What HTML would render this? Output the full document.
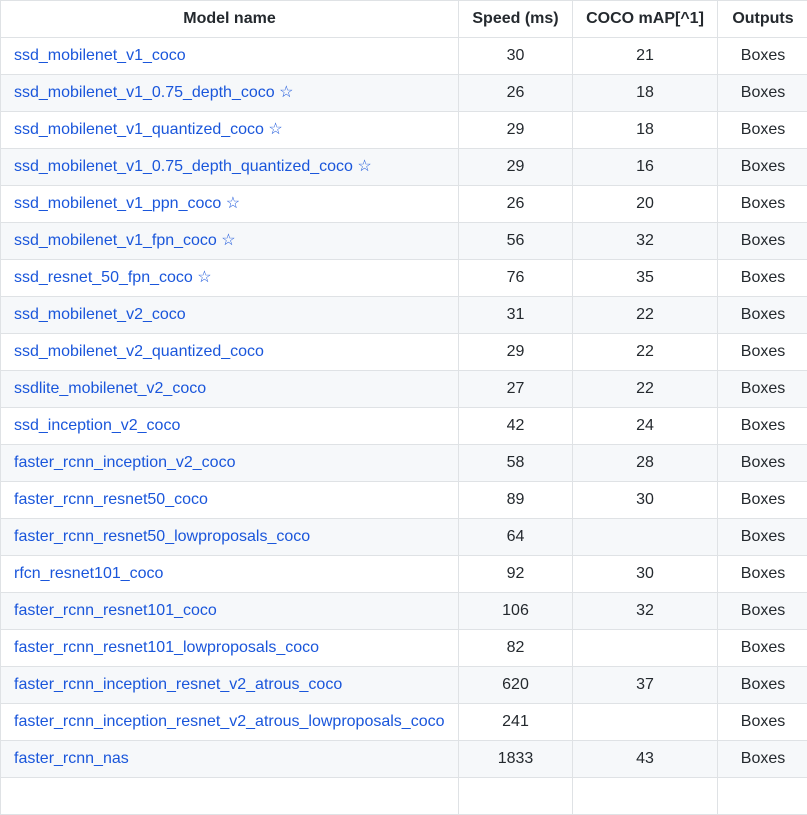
<!DOCTYPE html>
<html><head><meta charset="utf-8"><style>
body{margin:0;background:#fff;font-family:"Liberation Sans",sans-serif;font-size:16px;color:#24292e;overflow:hidden}
table{border-collapse:collapse;table-layout:fixed;position:absolute;left:0;top:0;width:808px}
td,th{border:1px solid #dfe2e5;padding:0 13px;height:36px;line-height:24px;white-space:nowrap;overflow:hidden}
th{font-weight:bold;text-align:center}
td{text-align:center}
td:first-child{text-align:left}
tr.g td{background:#f6f8fa}
a{color:#1a56db;text-decoration:none}
</style></head><body>
<table>
<colgroup><col style="width:458px"><col style="width:114px"><col style="width:145px"><col style="width:91px"></colgroup>
<tr><th>Model name</th><th>Speed (ms)</th><th>COCO mAP[^1]</th><th>Outputs</th></tr>
<tr><td><a>ssd_mobilenet_v1_coco</a></td><td>30</td><td>21</td><td>Boxes</td></tr>
<tr class="g"><td><a>ssd_mobilenet_v1_0.75_depth_coco ☆</a></td><td>26</td><td>18</td><td>Boxes</td></tr>
<tr><td><a>ssd_mobilenet_v1_quantized_coco ☆</a></td><td>29</td><td>18</td><td>Boxes</td></tr>
<tr class="g"><td><a>ssd_mobilenet_v1_0.75_depth_quantized_coco ☆</a></td><td>29</td><td>16</td><td>Boxes</td></tr>
<tr><td><a>ssd_mobilenet_v1_ppn_coco ☆</a></td><td>26</td><td>20</td><td>Boxes</td></tr>
<tr class="g"><td><a>ssd_mobilenet_v1_fpn_coco ☆</a></td><td>56</td><td>32</td><td>Boxes</td></tr>
<tr><td><a>ssd_resnet_50_fpn_coco ☆</a></td><td>76</td><td>35</td><td>Boxes</td></tr>
<tr class="g"><td><a>ssd_mobilenet_v2_coco</a></td><td>31</td><td>22</td><td>Boxes</td></tr>
<tr><td><a>ssd_mobilenet_v2_quantized_coco</a></td><td>29</td><td>22</td><td>Boxes</td></tr>
<tr class="g"><td><a>ssdlite_mobilenet_v2_coco</a></td><td>27</td><td>22</td><td>Boxes</td></tr>
<tr><td><a>ssd_inception_v2_coco</a></td><td>42</td><td>24</td><td>Boxes</td></tr>
<tr class="g"><td><a>faster_rcnn_inception_v2_coco</a></td><td>58</td><td>28</td><td>Boxes</td></tr>
<tr><td><a>faster_rcnn_resnet50_coco</a></td><td>89</td><td>30</td><td>Boxes</td></tr>
<tr class="g"><td><a>faster_rcnn_resnet50_lowproposals_coco</a></td><td>64</td><td></td><td>Boxes</td></tr>
<tr><td><a>rfcn_resnet101_coco</a></td><td>92</td><td>30</td><td>Boxes</td></tr>
<tr class="g"><td><a>faster_rcnn_resnet101_coco</a></td><td>106</td><td>32</td><td>Boxes</td></tr>
<tr><td><a>faster_rcnn_resnet101_lowproposals_coco</a></td><td>82</td><td></td><td>Boxes</td></tr>
<tr class="g"><td><a>faster_rcnn_inception_resnet_v2_atrous_coco</a></td><td>620</td><td>37</td><td>Boxes</td></tr>
<tr><td><a>faster_rcnn_inception_resnet_v2_atrous_lowproposals_coco</a></td><td>241</td><td></td><td>Boxes</td></tr>
<tr class="g"><td><a>faster_rcnn_nas</a></td><td>1833</td><td>43</td><td>Boxes</td></tr>
<tr><td><a>&nbsp;</a></td><td></td><td></td><td></td></tr>
</table>
</body></html>
